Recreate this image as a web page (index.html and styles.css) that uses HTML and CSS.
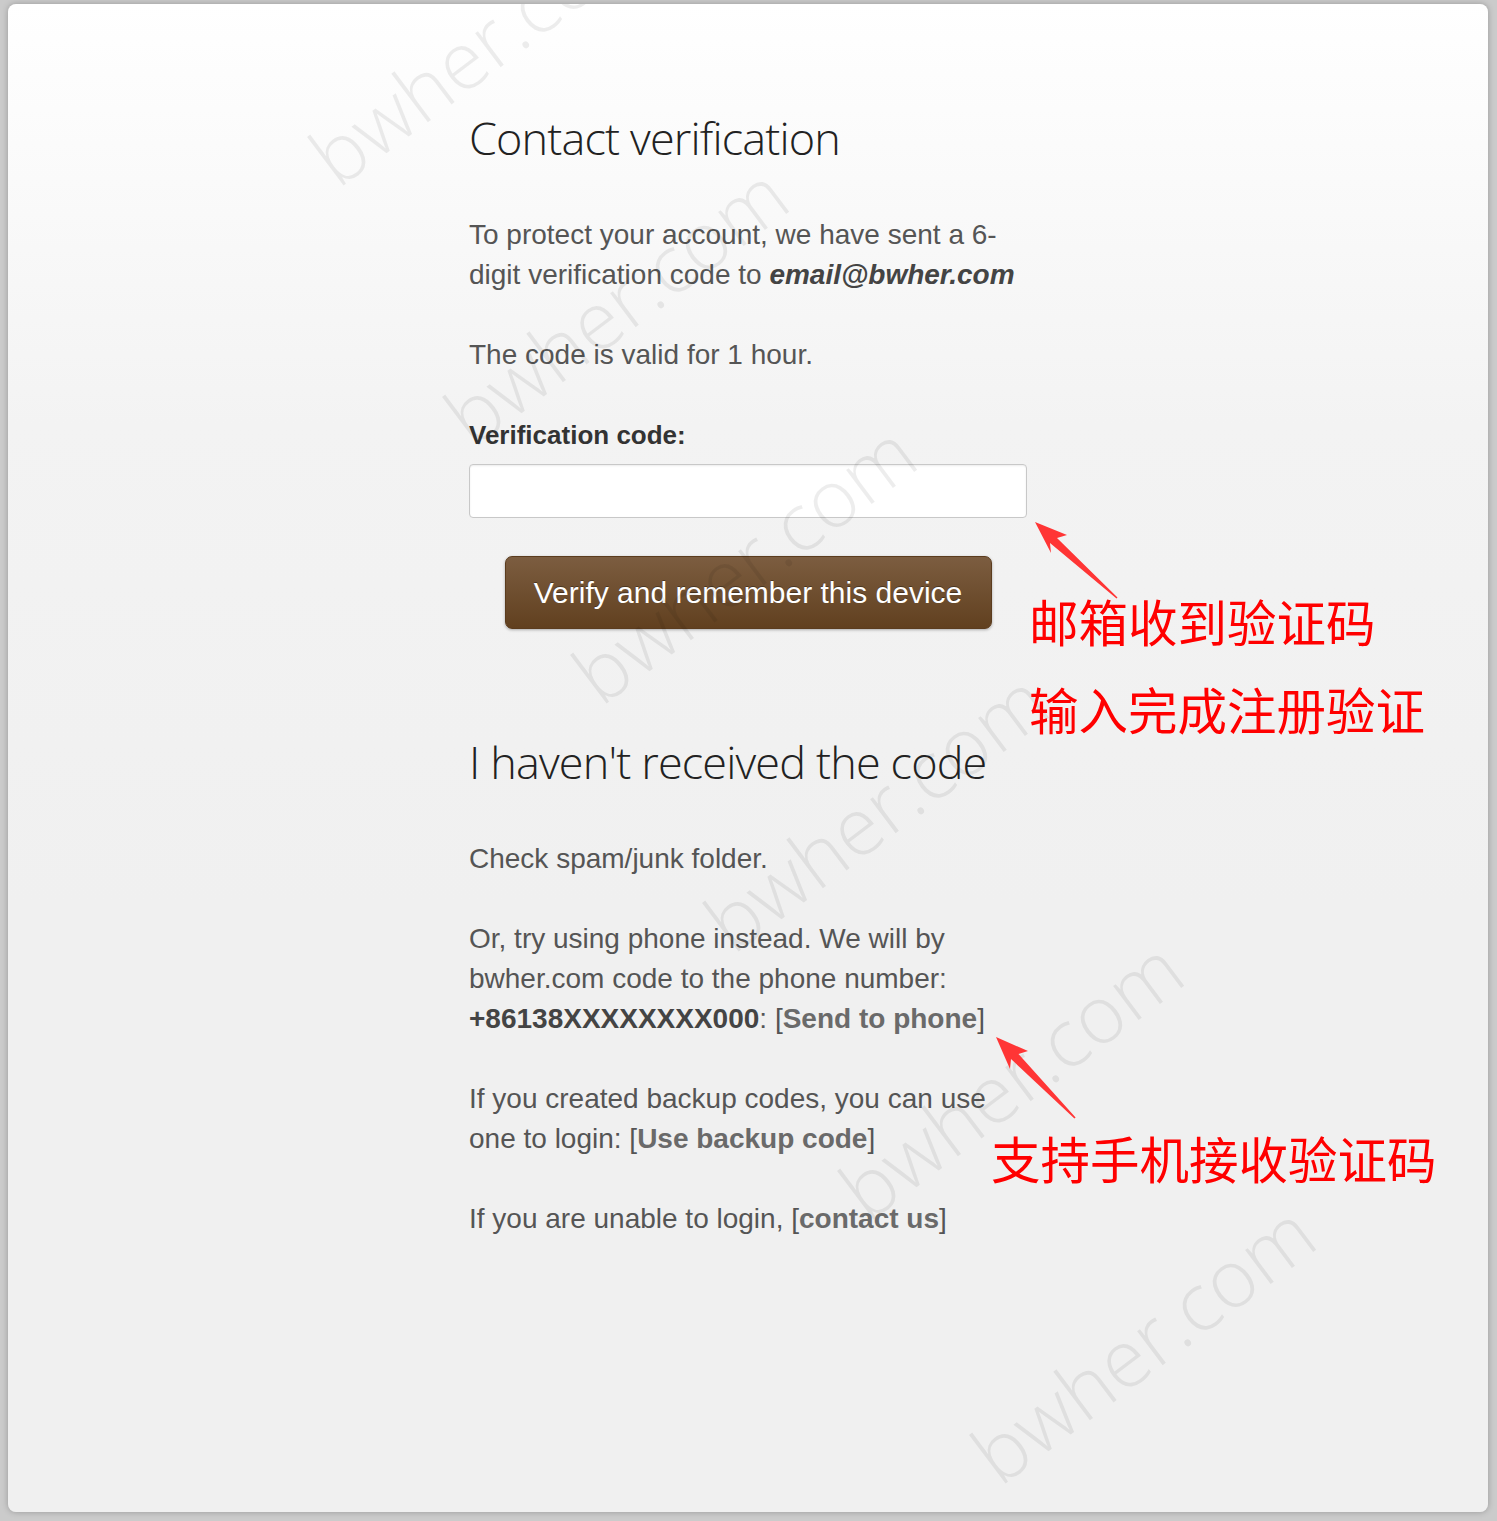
FILE: index.html
```html
<!DOCTYPE html>
<html lang="en">
<head>
    <meta charset="UTF-8">
    <meta name="viewport" content="width=device-width, initial-scale=1.0">
    <title>Contact verification</title>
    <link rel="stylesheet" href="styles.css">
</head>

<body>
    <main class="card">
        <section class="content">
            <h1 class="title">Contact verification</h1>
            <p>To protect your account, we have sent a 6-digit verification code to <b class="email">email@bwher.com</b></p>
            <p>The code is valid for 1 hour.</p>

            <form class="verify" onsubmit="return false;">
                <label for="code">Verification code:</label>
                <input id="code" type="text" autocomplete="off">
                <button type="submit">Verify and remember this device</button>
            </form>

            <h2 class="title">I haven't received the code</h2>
            <p>Check spam/junk folder.</p>
            <p>Or, try using phone instead. We will by bwher.com code to the phone number: <b>+86138XXXXXXXX000</b>: [<a href="#">Send to phone</a>]</p>
            <p>If you created backup codes, you can use one to login: [<a href="#">Use backup code</a>]</p>
            <p>If you are unable to login, [<a href="#">contact us</a>]</p>
        </section>

        <!-- watermark -->
        <div class="marks">
            <span class="mark" style="left: 472px; top: 40px;">bwher.com</span>
            <span class="mark" style="left: 607px; top: 300px;">bwher.com</span>
            <span class="mark" style="left: 735px; top: 558px;">bwher.com</span>
            <span class="mark" style="left: 867px; top: 806px;">bwher.com</span>
            <span class="mark" style="left: 1002px; top: 1074px;">bwher.com</span>
            <span class="mark" style="left: 1134px; top: 1338px;">bwher.com</span>
        </div>

        <!-- annotations -->
        <svg class="arrows" viewBox="8 4 1480 1508" width="1480" height="1508">
            <polygon fill="#ff3535" points="1035,522 1067,535 1057,538 1117.5,597.4 1116.5,598.6 1050,543 1051,553"/>
            <polygon fill="#ff3535" points="996,1037 1028,1051 1018.5,1054 1075.6,1117.4 1074.4,1118.6 1011,1059 1010,1069"/>
        </svg>
        <div class="note note-email">邮箱收到验证码<br>输入完成注册验证</div>
        <div class="note note-phone">支持手机接收验证码</div>
    </main>
</body>
</html>
```

FILE: styles.css
```css
body {
    margin: 0;
    background: #cbcbcb;
    font-family: 'Liberation Sans', Arial, sans-serif;
}

.card {
    position: relative;
    overflow: hidden;
    margin: 4px 9px 9px 8px;
    height: 1508px;
    border-radius: 8px;
    background: linear-gradient(#ffffff 0, #f3f3f3 420px, #f0f0f0 900px, #f0f0f0 100%);
    box-shadow: 0 0 6px rgba(0, 0, 0, 0.25);
}

.content {
    position: relative;
    z-index: 1;
    width: 558px;
    padding: 106px 0 0 461px;
    color: #555;
    font-size: 28px;
    line-height: 40px;
}

.title {
    margin: 0 0 49px;
    font-family: 'Open Sans', 'Liberation Sans', sans-serif;
    font-weight: 300;
    font-size: 45px;
    letter-spacing: -0.85px;
    line-height: 56px;
    color: #222;
}

p {
    margin: 0 0 40px;
}

b {
    color: #444;
}

.email {
    font-style: italic;
}

a {
    color: #6a6a6a;
    font-weight: bold;
    text-decoration: none;
}

.verify {
    display: flex;
    flex-direction: column;
    align-items: center;
    margin-bottom: 105px;
}

.verify label {
    align-self: stretch;
    font-weight: bold;
    font-size: 26px;
    color: #333;
    margin-bottom: 9px;
}

.verify input {
    box-sizing: border-box;
    width: 558px;
    height: 54px;
    margin: 0 0 38px;
    border: 1px solid #c8c8c8;
    border-radius: 4px;
    background: #fff;
    box-shadow: inset 0 1px 2px rgba(0, 0, 0, 0.08);
}

.verify button {
    box-sizing: border-box;
    width: 487px;
    height: 73px;
    border: 1px solid #5b3c1e;
    border-radius: 7px;
    background: linear-gradient(#7c5d40, #61401f);
    box-shadow: 0 1px 3px rgba(0, 0, 0, 0.3);
    color: #fff;
    font-family: 'Liberation Sans', Arial, sans-serif;
    font-size: 30px;
    text-shadow: 0 -1px 0 rgba(0, 0, 0, 0.35);
    cursor: pointer;
}

.marks {
    position: absolute;
    inset: 0;
    pointer-events: none;
    z-index: 2;
}

.mark {
    position: absolute;
    transform: translate(-50%, -50%) rotate(-37deg);
    font-family: 'Open Sans', sans-serif;
    font-weight: 300;
    font-size: 80px;
    line-height: 1;
    white-space: nowrap;
    color: rgba(0, 0, 0, 0.07);
}

.arrows {
    position: absolute;
    left: 0;
    top: 0;
    z-index: 3;
}

.note {
    position: absolute;
    z-index: 3;
    font-family: 'Noto Sans CJK SC', sans-serif;
    font-size: 49.5px;
    line-height: 88px;
    color: #ff0000;
    white-space: nowrap;
}

.note-email {
    left: 1021px;
    top: 573px;
}

.note-phone {
    left: 983px;
    top: 1110px;
}
```
